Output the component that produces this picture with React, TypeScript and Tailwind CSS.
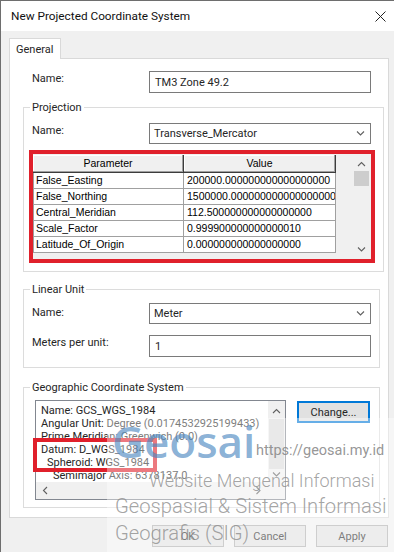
const params = [
  ["False_Easting", "200000.000000000000000000"],
  ["False_Northing", "1500000.000000000000000000"],
  ["Central_Meridian", "112.500000000000000000"],
  ["Scale_Factor", "0.999900000000000010"],
  ["Latitude_Of_Origin", "0.000000000000000000"],
];

function Chev({ dir, className = "" }: { dir: "up" | "down" | "left" | "right"; className?: string }) {
  const paths = {
    up: "M1 5 L4.5 1.5 L8 5",
    down: "M1 1.5 L4.5 5 L8 1.5",
    left: "M5 1 L1.5 4.5 L5 8",
    right: "M1.5 1 L5 4.5 L1.5 8",
  };
  const flat = dir === "up" || dir === "down";
  return (
    <svg
      width={flat ? 9 : 7}
      height={flat ? 7 : 9}
      viewBox={flat ? "0 0 9 7" : "0 0 7 9"}
      className={className}
    >
      <path d={paths[dir]} fill="none" stroke="currentColor" strokeWidth="1.1" />
    </svg>
  );
}

function Combo({ value }: { value: string }) {
  return (
    <div className="flex h-[21px] w-[222px] items-center justify-between border border-[#7a7a7a] bg-white pl-[4px] pr-[5px]">
      <span>{value}</span>
      <Chev dir="down" className="text-[#606060]" />
    </div>
  );
}

function TextBox({ value }: { value: string }) {
  return (
    <div className="flex h-[22px] w-[222px] items-center border border-[#7a7a7a] bg-white pl-[5px]">
      {value}
    </div>
  );
}

function Group({ title, className = "", children }: { title: string; className?: string; children: React.ReactNode }) {
  return (
    <fieldset className={`w-[357px] border border-[#dcdcdc] px-[8px] ${className}`}>
      <legend className="-ml-[2px] px-[2px] leading-[13px]">{title}</legend>
      {children}
    </fieldset>
  );
}

export default function App() {
  return (
    <div className="relative h-[552px] w-[394px] overflow-hidden border-l border-t border-[#6e6e6e] bg-[#f0f0f0] font-['Roboto',sans-serif] text-[11px] leading-[13px] text-[#262626]">
      {/* title bar */}
      <div className="flex h-[30px] items-center justify-between bg-white pl-[10px] pr-[8px]">
        <span className="text-[11.8px] text-[#111]">New Projected Coordinate System</span>
        <svg width="11" height="11" viewBox="0 0 11 11" className="text-[#222]">
          <path d="M0.5 0.5 L10.5 10.5 M10.5 0.5 L0.5 10.5" stroke="currentColor" strokeWidth="1" />
        </svg>
      </div>

      <div className="ml-[8px] mt-[7px] w-[380px]">
        <div className="relative z-10 -mb-px flex h-[21px] w-[52px] items-center border border-b-0 border-[#d9d9d9] bg-white pl-[6px]">
          General
        </div>
        <div className="h-[460px] border border-[#d9d9d9] bg-white pl-[13px] pr-[8px] pt-[12px]">
          <div className="flex items-start pl-[9px]">
            <span className="w-[117px] pt-[1px]">Name:</span>
            <TextBox value="TM3 Zone 49.2" />
          </div>

          <Group title="Projection" className="mt-[8px] pb-[8px]">
            <div className="mt-[9px] flex items-start">
              <span className="w-[117px] pt-[1px]">Name:</span>
              <Combo value="Transverse_Mercator" />
            </div>
            <div className="-ml-[3px] mt-[6px] h-[113px] w-[346px] border-4 border-[#e0202b]">
              <div className="flex h-full bg-[#f0f0f0] pt-[1px] font-['Liberation_Sans',Arial,sans-serif] text-[10.5px] text-black">
                <div className="w-[303px]">
                  <div className="flex h-[18px] bg-[#f0f0f0]">
                    <div className="flex w-[151px] items-center justify-center border-b border-r border-[#3c3c3c] shadow-[inset_-1px_-1px_0_#a0a0a0,inset_1px_1px_0_#ffffff]">
                      Parameter
                    </div>
                    <div className="flex w-[152px] items-center justify-center border-b border-r border-[#3c3c3c] shadow-[inset_-1px_-1px_0_#a0a0a0,inset_1px_1px_0_#ffffff]">
                      Value
                    </div>
                  </div>
                  {params.map(([name, value]) => (
                    <div key={name} className="flex h-[16px] bg-white">
                      <div className="flex w-[151px] items-center border-b border-l border-r border-[#a0a0a0] pl-[2px]">
                        {name}
                      </div>
                      <div className="flex w-[152px] items-center overflow-hidden whitespace-nowrap border-b border-r border-[#a0a0a0] pl-[3px]">
                        {value}
                      </div>
                    </div>
                  ))}
                </div>
                <div className="ml-[18px] flex w-[15px] flex-col items-center text-[#606060]">
                  <Chev dir="up" className="mt-[6px]" />
                  <div className="mt-[3px] h-[15px] w-[15px] bg-[#cdcdcd]" />
                  <div className="flex-1" />
                  <Chev dir="down" className="mb-[6px]" />
                </div>
              </div>
            </div>
          </Group>

          <Group title="Linear Unit" className="mt-[11px] pb-[10px]">
            <div className="mt-[7px] flex items-start">
              <span className="w-[117px] pt-[3px]">Name:</span>
              <Combo value="Meter" />
            </div>
            <div className="mt-[11px] flex items-start">
              <span className="w-[117px] pt-[1px]">Meters per unit:</span>
              <TextBox value="1" />
            </div>
          </Group>

          <Group title="Geographic Coordinate System" className="mt-[13px] pb-[7px]">
            <div className="mt-[6px] flex items-start">
              <div className="ml-[3px] flex h-[100px] w-[251px] flex-col border border-[#828790] bg-white">
                <div className="flex flex-1 overflow-hidden">
                  <div className="flex-1 overflow-hidden whitespace-nowrap pl-[5px] pt-[3px]">
                    <div>Name: GCS_WGS_1984</div>
                    <div>Angular Unit: Degree (0.0174532925199433)</div>
                    <div>Prime Meridian: Greenwich (0.0)</div>
                    <div>Datum: D_WGS_1984</div>
                    <div className="pl-[6px]">Spheroid: WGS_1984</div>
                    <div className="pl-[12px]">Semimajor Axis: 6378137.0</div>
                  </div>
                  <div className="flex w-[17px] flex-col items-center bg-[#f0f0f0] text-[#606060]">
                    <Chev dir="up" className="mt-[7px]" />
                    <div className="mt-[4px] h-[50px] w-[15px] bg-[#dadada]" />
                    <div className="flex-1" />
                    <Chev dir="down" className="mb-[4px]" />
                  </div>
                </div>
                <div className="flex h-[17px]">
                  <div className="flex flex-1 items-center justify-between bg-[#f0f0f0] px-[6px] text-[#606060]">
                    <Chev dir="left" />
                    <Chev dir="right" />
                  </div>
                  <div className="w-[17px] bg-[#f0f0f0]" />
                </div>
              </div>
              <div className="ml-[11px] mt-[1px] flex h-[22px] w-[73px] items-center justify-center border border-[#0078d7] bg-[#e1e1e1] shadow-[inset_0_0_0_1px_#0078d7]">
                Change...
              </div>
            </div>
          </Group>
        </div>
      </div>

      <div className="mt-[7px] flex justify-end gap-[10px] pr-[6px]">
        {["OK", "Cancel", "Apply"].map((b) => (
          <div
            key={b}
            className="flex h-[22px] w-[72px] items-center justify-center border border-[#adadad] bg-[#e1e1e1]"
          >
            {b}
          </div>
        ))}
      </div>

      {/* annotation box */}
      <div className="absolute left-[32px] top-[437px] h-[34px] w-[124px] border-4 border-[#e0202b]" />

      {/* watermark */}
      <div className="pointer-events-none absolute bottom-0 left-[106px] right-0 top-[417px] bg-white/40" />
      <div className="pointer-events-none absolute left-[111px] top-[418px] whitespace-nowrap font-['Open_Sans',sans-serif] text-[44px] font-semibold leading-none text-[#4a86c0]/65">
        Geosai
      </div>
      <div className="pointer-events-none absolute left-[255px] top-[443px] whitespace-nowrap font-['Roboto',sans-serif] text-[14.5px] leading-none text-[#8a8a8a]/90">
        https://geosai.my.id
      </div>
      <div className="pointer-events-none absolute left-[148px] top-[468px] whitespace-nowrap font-['Roboto',sans-serif] text-[18px] font-light leading-[24px] text-[#8c8c8c]/80">
        Website Mengenal Informasi
      </div>
      <div className="pointer-events-none absolute left-[114px] top-[493px] whitespace-nowrap font-['Roboto',sans-serif] text-[20.2px] font-light leading-[24px] text-[#8c8c8c]/80">
        Geospasial &amp; Sistem Informasi
      </div>
      <div className="pointer-events-none absolute left-[114px] top-[520px] whitespace-nowrap font-['Roboto',sans-serif] text-[20.2px] font-light leading-[24px] text-[#8c8c8c]/80">
        Geografis (SIG)
      </div>
    </div>
  );
}
